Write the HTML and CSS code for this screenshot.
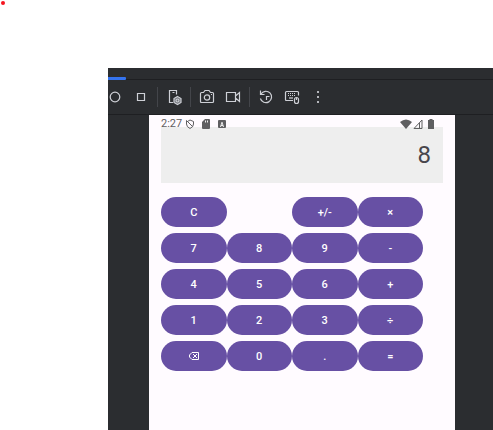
FILE: index.html
```html
<!DOCTYPE html>
<html lang="en">
<head>
<meta charset="utf-8">
<title>Calculator</title>
<link rel="stylesheet" href="styles.css">
</head>
<body>
<span class="marker"></span>
<main class="emulator">
  <div class="tabs"><span class="tab-line"></span></div>
  <div class="toolbar">
    <button class="tool" aria-label="Home"><svg viewBox="0 0 18 18"><circle cx="9" cy="9" r="4.800"/></svg></button>
    <button class="tool" aria-label="Overview"><svg viewBox="0 0 18 18"><path d="M5.500 5.500h7v7h-7z"/></svg></button>
    <span class="divider"></span>
    <button class="tool" aria-label="Device settings"><svg viewBox="0 0 18 18"><path d="M8 14.500H4.500v-12h7v4M7.500 4.500h2"/><path class="gear" d="M12.500 8.500l3.500 2v4l-3.500 2-3.500-2v-4z"/><circle cx="12.500" cy="12.500" r="1.500"/></svg></button>
    <span class="divider"></span>
    <button class="tool" aria-label="Take screenshot"><svg viewBox="0 0 18 18"><path d="M3.500 4.500h2l1.500-2h4l1.500 2h2q1 0 1 1v8q0 1-1 1h-11q-1 0-1-1v-8q0-1 1-1z"/><circle cx="9" cy="9.500" r="2.700"/><path d="M13 6.500h1"/></svg></button>
    <button class="tool" aria-label="Record screen"><svg viewBox="0 0 18 18"><path d="M2.500 4.500h9v9h-9zM11.500 8l4-3.500v9l-4-3.500"/></svg></button>
    <span class="divider"></span>
    <button class="tool" aria-label="Reset"><svg viewBox="0 0 18 18"><path d="M3.500 2.500v4h4M4 6a5.700 5.700 0 1 1-.6 4.500M12.500 8.500h-3V12"/></svg></button>
    <button class="tool" aria-label="Hardware input"><svg viewBox="0 0 18 18"><path d="M10 12.500H3.500q-1 0-1-1v-7q0-1 1-1h11q1 0 1 1v3"/><path stroke-dasharray="1 1" d="M5 5.500h8M5 7.500h8"/><path d="M6 10h4"/><rect x="11.500" y="9.500" width="4" height="6" rx="2"/><path d="M13.500 10v2"/></svg></button>
    <button class="tool" aria-label="More"><svg class="solid" viewBox="0 0 18 18"><path d="M8 3h2v2H8zM8 8h2v2H8zM8 13h2v2H8z"/></svg></button>
  </div>
  <section class="device">
    <div class="status">
      <time>2:27</time>
      <svg class="line" viewBox="0 0 10 10"><path d="M2.500 2.500L5 1l3.500 1.500V5Q8.500 8 5 9.500 1.500 8 1.500 5V1.500l6 6"/></svg>
      <svg viewBox="0 0 10 10"><path d="M4 0h4q1 0 1 1v8q0 1-1 1H2q-1 0-1-1V3z"/><path class="cut" d="M4 1.500h1v2H4zM6 1.500h1v2H6z"/></svg>
      <svg viewBox="0 0 10 10"><rect x="1" y="1" width="8" height="8" rx="1"/><path class="cut" d="M3 8l1.500-5h1L7 8H6l-.3-1H4.300L4 8zM4.600 6h.8L5 4.500z"/></svg>
      <span class="signals">
        <svg class="wifi" viewBox="0 0 12 10"><path d="M0 3Q6-2 12 3L6 10z"/></svg>
        <svg class="line" viewBox="0 0 10 10"><path d="M1 9.500l8-8.500v8.500zM6.500 4v5"/></svg>
        <svg class="battery" viewBox="0 0 10 10"><path d="M3.500 0h3v1H8v9H2V1h1.500z"/></svg>
      </span>
    </div>
    <output class="display">8</output>
    <div class="keys">
      <button class="key">C</button>
      <button class="key wide-start">+/-</button>
      <button class="key">×</button>
      <button class="key">7</button>
      <button class="key">8</button>
      <button class="key">9</button>
      <button class="key">-</button>
      <button class="key">4</button>
      <button class="key">5</button>
      <button class="key">6</button>
      <button class="key">+</button>
      <button class="key">1</button>
      <button class="key">2</button>
      <button class="key">3</button>
      <button class="key">÷</button>
      <button class="key" aria-label="Backspace"><svg viewBox="0 0 12 10"><path d="M4 1.500h6.500v7H4L1.500 6V4zM5 3l4 4M9 3L5 7"/></svg></button>
      <button class="key">0</button>
      <button class="key">.</button>
      <button class="key">=</button>
    </div>
  </section>
</main>
</body>
</html>
```
FILE: styles.css
```css
* {
  box-sizing: border-box;
}

body {
  margin: 0;
  min-height: 100vh;
  padding: 68px 0 0 108px;
  display: flex;
  background: #fff;
  font-family: Roboto, "Liberation Sans", sans-serif;
}

button {
  margin: 0;
  padding: 0;
  border: 0;
  font: inherit;
}

.marker {
  position: absolute;
  top: 1px;
  left: 1px;
  width: 4px;
  height: 4px;
  border-radius: 2px;
  background: #f5141e;
}

.emulator {
  flex: 1;
  min-width: 0;
  display: flex;
  flex-direction: column;
  overflow: hidden;
  background: #2b2d30;
}

.tabs {
  height: 12px;
  display: flex;
  align-items: flex-end;
  border-bottom: 1px solid #1e1f22;
}

.tab-line {
  width: 18px;
  height: 3px;
  margin-bottom: -1px;
  border-radius: 0 1px 1px 0;
  background: #3574f0;
}

.toolbar {
  height: 35px;
  margin-left: -6px;
  display: flex;
  align-items: center;
  border-bottom: 1px solid #1e1f22;
}

.tool {
  flex: none;
  width: 26px;
  height: 26px;
  display: flex;
  align-items: center;
  justify-content: center;
  background: none;
}

.tool svg {
  width: 18px;
  height: 18px;
  fill: none;
  stroke: #ced0d6;
  stroke-width: 1.2;
}

.tool .gear {
  fill: #6f7278;
}

.tool .solid {
  fill: #b4b6bb;
  stroke: none;
}

.divider {
  width: 1px;
  height: 20px;
  margin: 0 3px;
  background: #43454a;
}

.device {
  position: relative;
  flex: 1;
  margin: 0 38px 0 41px;
  padding: 12px;
  background: #fffbff;
}

.status {
  position: absolute;
  top: 3px;
  left: 12px;
  right: 19px;
  height: 12px;
  display: flex;
  align-items: center;
  gap: 6px;
  font-size: 11px;
  line-height: 12px;
  color: #5f5f61;
}

.status time {
  width: 18px;
  white-space: nowrap;
  font-size: 11px;
}

.status svg {
  width: 10px;
  height: 10px;
  fill: #5f5f61;
}

.status .line {
  fill: none;
  stroke: #5f5f61;
}

.status .cut {
  fill: #eee;
}

.status .wifi {
  width: 12px;
}

.signals {
  margin-left: auto;
  display: flex;
  gap: 1px;
}

.signals .battery {
  margin-left: 2px;
}

.display {
  height: 56px;
  padding: 0 12px;
  display: flex;
  align-items: center;
  justify-content: flex-end;
  background: #eee;
  font-size: 24px;
  color: #48464c;
}

.keys {
  margin: 14px 20px 0 0;
  display: grid;
  grid-template-columns: repeat(4, 1fr);
  gap: 6px 0;
}

.key {
  height: 30px;
  display: flex;
  align-items: center;
  justify-content: center;
  border-radius: 15px;
  background: #6750a4;
  font-size: 11px;
  font-weight: 500;
  color: #fff;
}

.wide-start {
  grid-column: 3;
}

.key svg {
  width: 12px;
  height: 10px;
  fill: none;
  stroke: #fff;
}
```
